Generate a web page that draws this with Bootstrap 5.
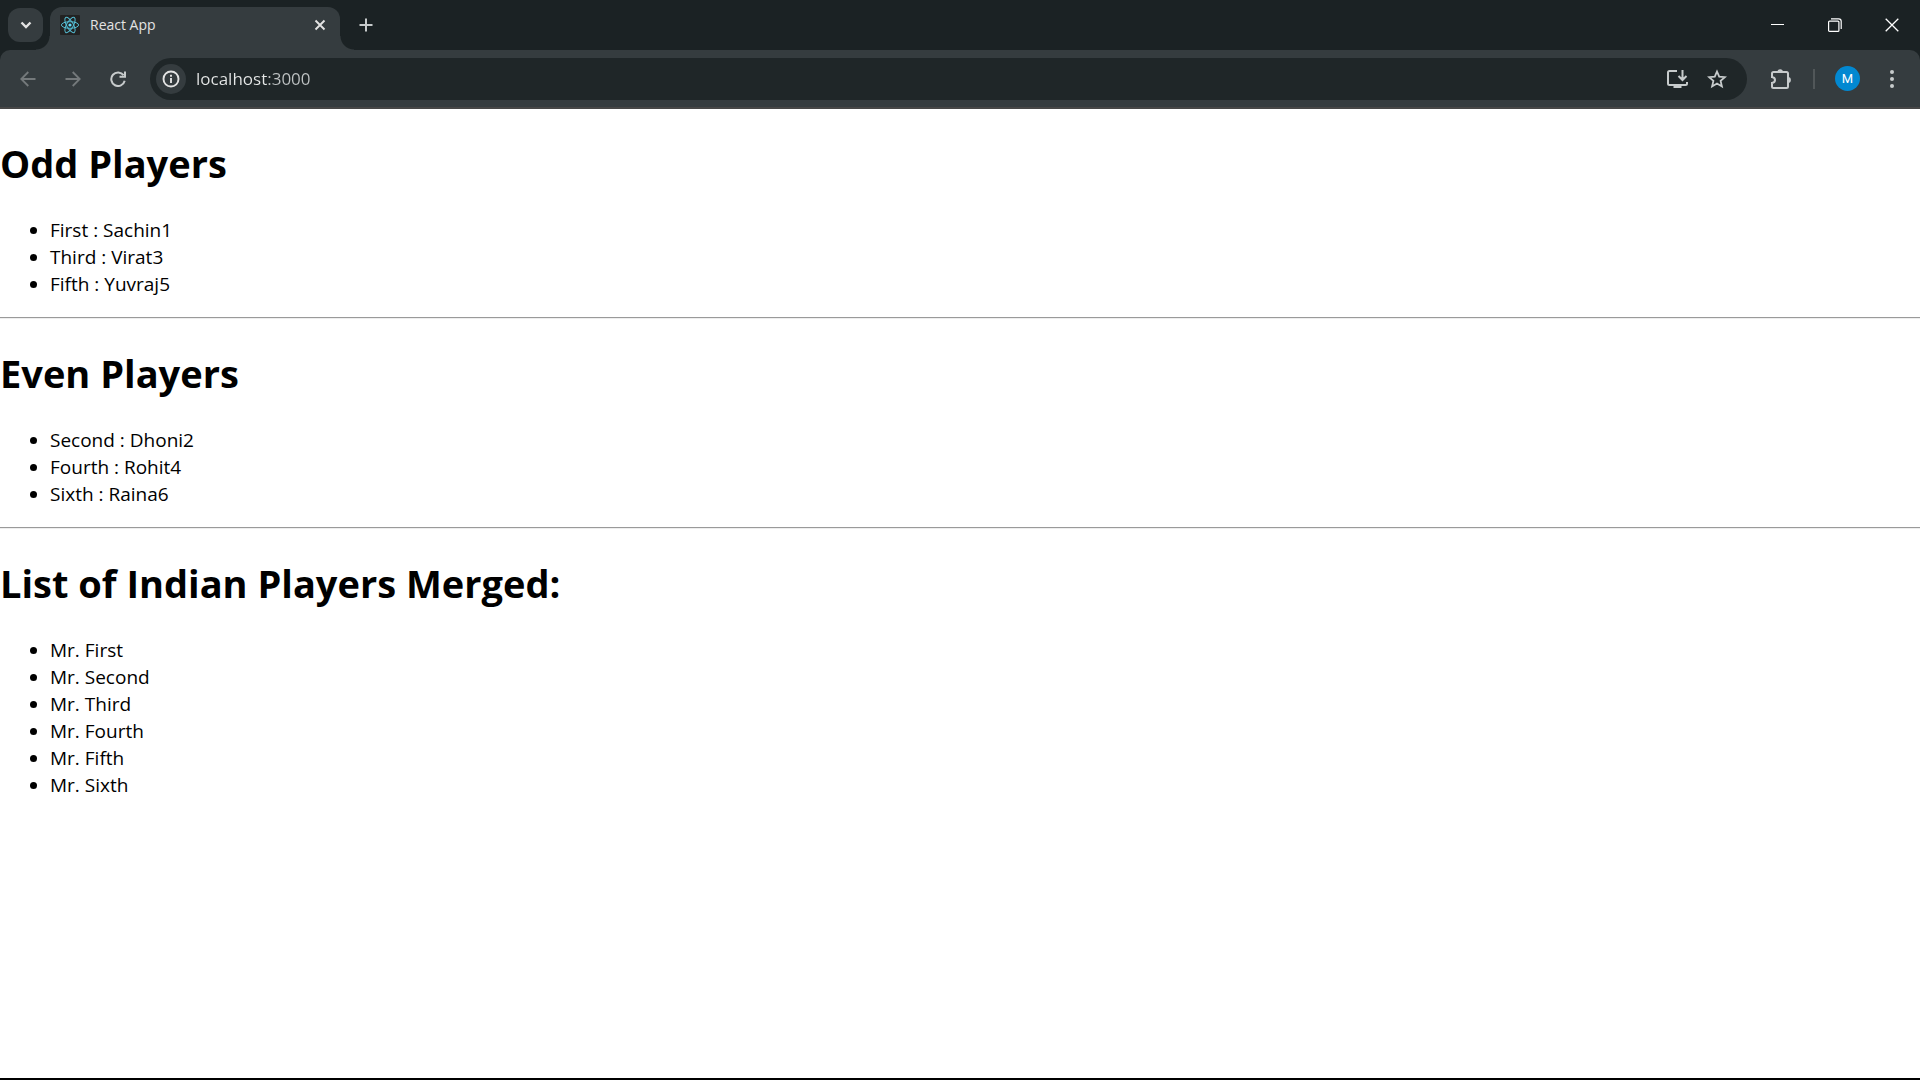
<!DOCTYPE html>
<html lang="en">
<head>
<meta charset="utf-8">
<meta name="viewport" content="width=device-width, initial-scale=1">
<title>React App</title>
<link href="https://cdn.jsdelivr.net/npm/bootstrap@5.3.0/dist/css/bootstrap.min.css" rel="stylesheet">
<style>
  body { font-family: "Open Sans", "Noto Sans", sans-serif; color: #000; background: #fff; }
  svg { display: block; fill: none; stroke: currentColor; flex: none; }
  .plain-btn { border: 0; padding: 0; background: none; color: #c7cbcc; display: flex; align-items: center; justify-content: center; flex: none; }

  /* Tab strip */
  .tab-strip { height: 50px; background: #1b2224; padding-left: 8px; }
  .tab-search { width: 35px; height: 34px; border-radius: 12px; background: #353c3f; color: #e3e3e3; margin: 8px 7px 0 0; }
  .browser-tab { position: relative; width: 290px; height: 43px; margin-top: 7px; padding: 0 13px 7px 10px; border-radius: 12px 12px 0 0; background: #353c3f; color: #e3e3e3; }
  .browser-tab::before, .browser-tab::after { content: ""; position: absolute; bottom: 0; width: 14px; height: 14px; }
  .browser-tab::before { right: 100%; background: radial-gradient(circle at 0 0, transparent 13px, #353c3f 14px); }
  .browser-tab::after { left: 100%; background: radial-gradient(circle at 100% 0, transparent 13px, #353c3f 14px); }
  .react-logo { color: #54bcd2; }
  .tab-title { font-size: 14px; line-height: 20px; margin-left: 10px; }
  .tab-close { color: #e3e3e3; }
  .new-tab { width: 52px; height: 50px; }
  .win-btn { width: 57px; height: 50px; color: #fff; }

  /* Toolbar */
  .toolbar-wrap { background: #1b2224; }
  .toolbar-row { height: 59px; background: #353c3f; border-bottom: 2px solid #474747; border-radius: 10px 10px 0 0; padding: 0 20px 0 5px; }
  .nav-btn { width: 45px; height: 42px; }
  .nav-btn:disabled { color: #74797b; }
  .address { height: 42px; border-radius: 21px; background: #1f2628; margin-left: 10px; padding: 0 20px 0 6px; }
  .site-info { width: 30px; height: 30px; border-radius: 15px; background: #353c3f; color: #e3e3e3; }
  .url-box { border: 0; outline: 0; padding: 0; margin-left: 10px; min-width: 0; font-size: 17px; line-height: 24px; color: transparent; background: linear-gradient(90deg, #e6e8e8 72px, #bfc3c4 72px); -webkit-background-clip: text; background-clip: text; }
  .install { margin-right: 18px; }
  .extensions { margin: 0 21px 0 23px; }
  .divider { width: 2px; height: 20px; background: #515759; }
  .avatar { width: 25px; height: 25px; border-radius: 13px; background: #0288d1; color: #fff; font: 13px/25px Roboto, sans-serif; margin: 0 24px 0 20px; }
  .menu-dots { width: 16px; }
  .menu-dots svg { fill: currentColor; stroke: none; }

  /* Page */
  .page h1 { font-size: 38px; line-height: 53px; font-weight: 700; margin: 28px 0 27px; }
  .page ul { font-size: 19px; line-height: 27px; margin: 0 0 19px; padding-left: 50px; }
  .page hr { margin: 0; opacity: 1; border: 0; border-top: 1px solid #9a9a9a; border-bottom: 1px solid #eee; }
  .edge { height: 2px; background: #000; }
</style>
</head>
<body class="d-flex flex-column min-vh-100">
<header>
  <div class="tab-strip d-flex">
    <button class="plain-btn tab-search" aria-label="Search tabs"><svg width="12" height="8" viewBox="0 0 12 8" stroke-width="2.400"><path d="M1.500 1.500 6 6l4.500-4.500"/></svg></button>
    <div class="browser-tab d-flex align-items-center">
      <svg class="react-logo" width="20" height="20" viewBox="0 0 20 20" stroke-width="1"><rect width="20" height="20" rx="1" fill="#222" stroke="none"/><ellipse cx="10" cy="10" rx="8.600" ry="3.300"/><ellipse cx="10" cy="10" rx="8.600" ry="3.300" transform="rotate(60 10 10)"/><ellipse cx="10" cy="10" rx="8.600" ry="3.300" transform="rotate(120 10 10)"/><circle cx="10" cy="10" r="1.600" fill="#61dafb" stroke="none"/></svg>
      <span class="tab-title me-auto">React App</span>
      <button class="plain-btn tab-close" aria-label="Close tab"><svg width="14" height="14" viewBox="0 0 14 14" stroke-width="1.900"><path d="m2.500 2.500 9 9m0-9-9 9"/></svg></button>
    </div>
    <button class="plain-btn new-tab" aria-label="New tab"><svg width="14" height="14" viewBox="0 0 14 14" stroke-width="2"><path d="M7 .5v13M.5 7h13"/></svg></button>
    <div class="d-flex ms-auto">
      <button class="plain-btn win-btn" aria-label="Minimize"><svg width="13" height="13" viewBox="0 0 13 13" shape-rendering="crispEdges"><path d="M0 5.500h13"/></svg></button>
      <button class="plain-btn win-btn" aria-label="Restore"><svg width="14" height="14" viewBox="0 0 14 14" stroke-width="1.200"><rect x=".6" y="3.100" width="10.300" height="10.300" rx="1"/><path d="M3 .8h7.700q2.500 0 2.500 2.500V11"/></svg></button>
      <button class="plain-btn win-btn" aria-label="Close"><svg width="14" height="14" viewBox="0 0 14 14" stroke-width="1.300"><path d="m.7.7 12.600 12.600m0-12.600L.7 13.300"/></svg></button>
    </div>
  </div>
  <div class="toolbar-wrap">
    <div class="toolbar-row d-flex align-items-center">
      <button class="plain-btn nav-btn" aria-label="Back" disabled><svg width="16" height="16" viewBox="0 0 16 16" stroke-width="1.800"><path d="M15.500 8H1.500M8.300 1 1.300 8l7 7"/></svg></button>
      <button class="plain-btn nav-btn" aria-label="Forward" disabled><svg width="16" height="16" viewBox="0 0 16 16" stroke-width="1.800"><path d="M.5 8h14M7.700 1l7 7-7 7"/></svg></button>
      <button class="plain-btn nav-btn" aria-label="Reload"><svg width="16" height="16" viewBox="0 0 16 16" stroke-width="2"><path d="M13.600 4.200A6.800 6.800 0 1 0 14.700 9.800M15 .5v5.300H9.500"/></svg></button>
      <div class="address d-flex align-items-center flex-grow-1">
        <button class="plain-btn site-info" aria-label="View site information"><svg width="18" height="18" viewBox="0 0 18 18" stroke-width="1.900"><circle cx="9" cy="9" r="7.500"/><path d="M9 8v5M9 4.800v2"/></svg></button>
        <input class="url-box flex-grow-1" type="text" aria-label="Address" value="localhost:3000">
        <button class="plain-btn install" aria-label="Install app"><svg width="24" height="20" viewBox="0 0 24 20" stroke-width="2"><path d="M12 2H4.500Q3 2 3 3.500v11Q3 16 4.500 16h16q1.500 0 1.500-1.500V13M17.500 1v9M13.500 7l4 4 4-4"/><path d="M8.500 16h8v3h-8z" fill="currentColor" stroke="none"/></svg></button>
        <button class="plain-btn" aria-label="Bookmark this tab"><svg width="20" height="20" viewBox="0 0 20 20" stroke-width="1.800"><path d="m10 2.500 2.200 5.200 5.700.5-4.300 3.700 1.300 5.500-4.900-2.900-4.900 2.900 1.300-5.500L2.100 8.200l5.700-.5z"/></svg></button>
      </div>
      <button class="plain-btn extensions" aria-label="Extensions"><svg width="22" height="22" viewBox="0 0 22 22" stroke-width="2"><path d="M3.500 4h13Q18 4 18 5.500v13q0 1.500-1.500 1.500h-13Q2 20 2 18.500V15q3-.4 3-3T2 9V5.500Q2 4 3.500 4z"/><path d="M7.500 4a2.700 2.700 0 0 1 5.400 0zM18 9a2.900 2.900 0 0 1 0 5.800z" fill="currentColor" stroke="none"/></svg></button>
      <span class="divider"></span>
      <button class="plain-btn avatar" aria-label="Profile M">M</button>
      <button class="plain-btn menu-dots" aria-label="Menu"><svg width="16" height="20" viewBox="0 0 16 20"><circle cx="8" cy="3" r="2"/><circle cx="8" cy="10" r="2"/><circle cx="8" cy="17" r="2"/></svg></button>
    </div>
  </div>
</header>
<main class="page flex-grow-1">
  <section>
    <h1>Odd Players</h1>
    <ul><li>First : Sachin1</li><li>Third : Virat3</li><li>Fifth : Yuvraj5</li></ul>
  </section>
  <hr>
  <section>
    <h1>Even Players</h1>
    <ul><li>Second : Dhoni2</li><li>Fourth : Rohit4</li><li>Sixth : Raina6</li></ul>
  </section>
  <hr>
  <section>
    <h1>List of Indian Players Merged:</h1>
    <ul><li>Mr. First</li><li>Mr. Second</li><li>Mr. Third</li><li>Mr. Fourth</li><li>Mr. Fifth</li><li>Mr. Sixth</li></ul>
  </section>
</main>
<footer class="edge"></footer>
<script src="https://cdn.jsdelivr.net/npm/bootstrap@5.3.0/dist/js/bootstrap.bundle.min.js"></script>
</body>
</html>
